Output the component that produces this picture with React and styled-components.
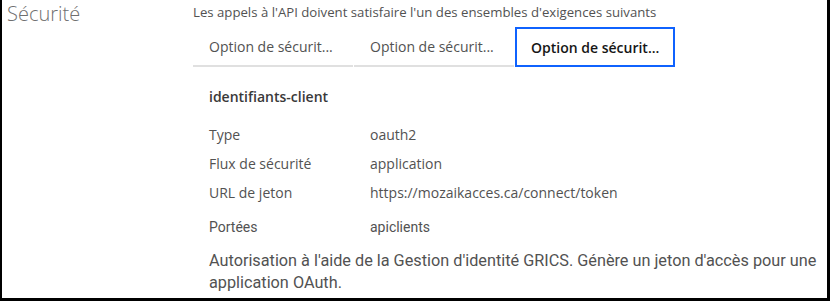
import React, { useState } from "react";
import styled, { createGlobalStyle } from "styled-components";

const GlobalStyle = createGlobalStyle`
  html, body {
    margin: 0;
    padding: 0;
    background: #ffffff;
  }
  body {
    font-family: "Open Sans", "Liberation Sans", sans-serif;
  }
`;

const Frame = styled.div`
  box-sizing: border-box;
  width: 830px;
  height: 301px;
  border-left: 2px solid #000;
  border-right: 3px solid #000;
  border-bottom: 3px solid #000;
  display: grid;
  grid-template-columns: 191px 1fr;
  overflow: hidden;
`;

const SectionTitle = styled.div`
  padding: 2px 0 0 5px;
  font-size: 20px;
  font-weight: 300;
  color: #6f6f6f;
  line-height: 24px;
`;

const Body = styled.div`
  display: flex;
  flex-direction: column;
`;

const Intro = styled.p`
  margin: 0;
  padding-top: 3px;
  font-size: 13.2px;
  line-height: 18px;
  color: #525252;
  white-space: nowrap;
`;

const TabList = styled.div`
  display: flex;
  margin-top: 6px;
`;

const Tab = styled.button`
  box-sizing: border-box;
  width: 160px;
  height: 40px;
  margin-right: 1px;
  padding: 0 16px;
  background: #fff;
  font-family: inherit;
  font-size: 14px;
  text-align: left;
  cursor: pointer;
  white-space: nowrap;
  color: ${(p) => (p.$active ? "#161616" : "#525252")};
  font-weight: ${(p) => (p.$active ? 600 : 400)};
  border: ${(p) => (p.$active ? "2px solid #0f62fe" : "none")};
  border-bottom: ${(p) => (p.$active ? "2px solid #0f62fe" : "2px solid #e0e0e0")};
  padding-left: ${(p) => (p.$active ? "14px" : "16px")};
`;

const Panel = styled.div`
  padding: 20px 0 0 16px;
`;

const SchemeName = styled.div`
  font-size: 14px;
  font-weight: 600;
  color: #393939;
  line-height: 20px;
  margin-bottom: 18px;
`;

const Props = styled.div`
  display: grid;
  grid-template-columns: 161px 1fr;
  row-gap: 9px;
  font-size: 14px;
  line-height: 20px;
  color: #525252;
`;

const Label = styled.div`
  margin-top: ${(p) => p.$gap || 0}px;
  font-family: ${(p) => (p.$narrow ? '"Roboto", sans-serif' : "inherit")};
`;

const Description = styled.p`
  margin: 13px 0 0;
  font-family: "Roboto", "Liberation Sans", sans-serif;
  font-size: 16.25px;
  line-height: 22px;
  color: #525252;
  padding-right: 8px;
`;

const rows = [
  ["Type", "oauth2"],
  ["Flux de sécurité", "application"],
  ["URL de jeton", "https://mozaikacces.ca/connect/token"],
];

export default function App() {
  const [active, setActive] = useState(2);
  return (
    <>
      <GlobalStyle />
      <Frame>
        <SectionTitle>Sécurité</SectionTitle>
        <Body>
          <Intro>
            Les appels à l'API doivent satisfaire l'un des ensembles d'exigences suivants
          </Intro>
          <TabList>
            {[0, 1, 2].map((i) => (
              <Tab key={i} $active={active === i} onClick={() => setActive(i)}>
                Option de sécurit...
              </Tab>
            ))}
          </TabList>
          <Panel>
            <SchemeName>identifiants-client</SchemeName>
            <Props>
              {rows.map(([k, v]) => (
                <React.Fragment key={k}>
                  <Label>{k}</Label>
                  <Label>{v}</Label>
                </React.Fragment>
              ))}
              <Label $gap={5} $narrow>Portées</Label>
              <Label $gap={5} $narrow>apiclients</Label>
            </Props>
            <Description>
              Autorisation à l'aide de la Gestion d'identité GRICS. Génère un jeton d'accès pour une application OAuth.
            </Description>
          </Panel>
        </Body>
      </Frame>
    </>
  );
}
